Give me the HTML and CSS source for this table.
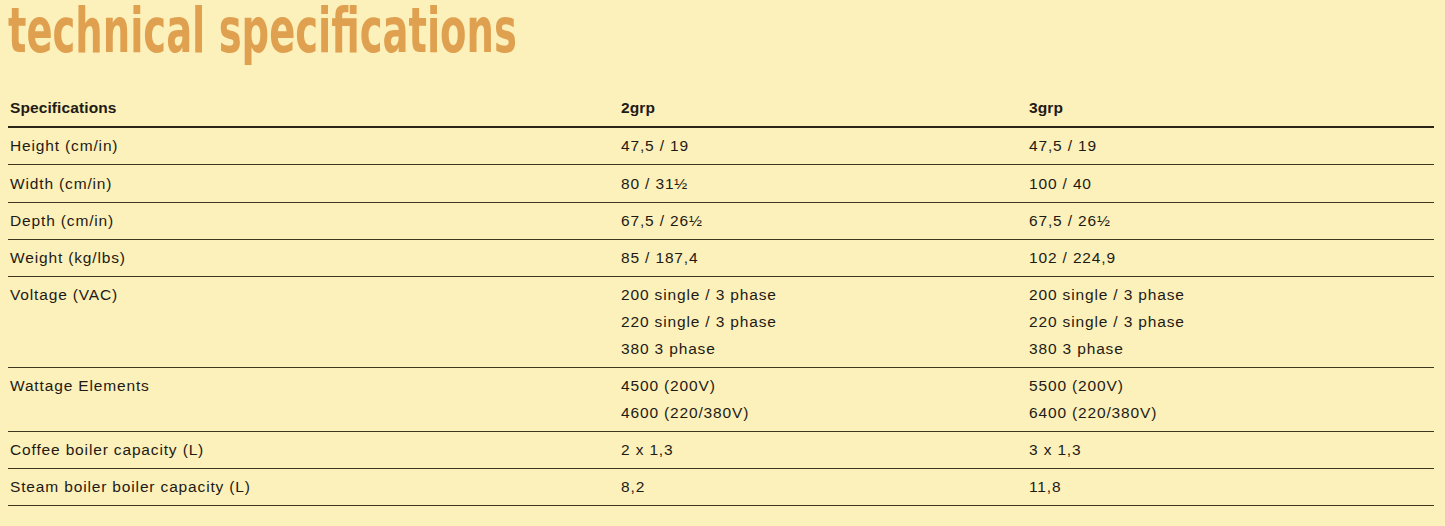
FILE: index.html
```html
<!DOCTYPE html>
<html lang="en">
<head>
<meta charset="utf-8">
<title>technical specifications</title>
<link rel="stylesheet" href="styles.css">
</head>
<body>
<div class="page">
  <h1 class="title"><span>technical specifications</span></h1>
  <table class="specs">
    <colgroup><col class="c1"><col class="c2"><col class="c3"></colgroup>
    <thead>
      <tr><th>Specifications</th><th>2grp</th><th>3grp</th></tr>
    </thead>
    <tbody>
      <tr><td>Height (cm/in)</td><td>47,5 / 19</td><td>47,5 / 19</td></tr>
      <tr><td>Width (cm/in)</td><td>80 / 31½</td><td>100 / 40</td></tr>
      <tr><td>Depth (cm/in)</td><td>67,5 / 26½</td><td>67,5 / 26½</td></tr>
      <tr><td>Weight (kg/lbs)</td><td>85 / 187,4</td><td>102 / 224,9</td></tr>
      <tr><td>Voltage (VAC)</td><td>200 single / 3 phase<br>220 single / 3 phase<br>380 3 phase</td><td>200 single / 3 phase<br>220 single / 3 phase<br>380 3 phase</td></tr>
      <tr><td>Wattage Elements</td><td>4500 (200V)<br>4600 (220/380V)</td><td>5500 (200V)<br>6400 (220/380V)</td></tr>
      <tr><td>Coffee boiler capacity (L)</td><td>2 x 1,3</td><td>3 x 1,3</td></tr>
      <tr><td>Steam boiler boiler capacity (L)</td><td>8,2</td><td>11,8</td></tr>
    </tbody>
  </table>
</div>
</body>
</html>
```

FILE: styles.css
```css
html, body {
  margin: 0;
  padding: 0;
  background: #fcf0bb;
}
.page {
  padding: 0 11px 0 8px;
}
.title {
  margin: 0;
  height: 70px;
  font-family: "Liberation Sans Narrow", "DejaVu Sans Condensed", "Liberation Sans", sans-serif;
  font-weight: bold;
  font-size: 62px;
  line-height: 62px;
  color: #dfa04f;
  white-space: nowrap;
  overflow: visible;
}
.title span {
  display: inline-block;
  transform-origin: 0 0;
  transform: scaleX(0.69);
}
.specs {
  width: 100%;
  border-collapse: collapse;
  table-layout: fixed;
  font-family: "Liberation Sans", Arial, sans-serif;
  font-size: 15.5px;
  letter-spacing: 0.85px;
  color: #1e1b14;
  margin-top: 20px;
}
.c1 { width: 611px; }
.c2 { width: 408px; }
.specs th {
  text-align: left;
  font-weight: bold;
  letter-spacing: 0.1px;
  padding: 6px 2px 6px;
  line-height: 24px;
  border-bottom: 2px solid #2a2516;
}
.specs td {
  vertical-align: top;
  padding: 5.3px 2px 4.3px;
  line-height: 26.7px;
  border-bottom: 1px solid #3f3820;
}
```
